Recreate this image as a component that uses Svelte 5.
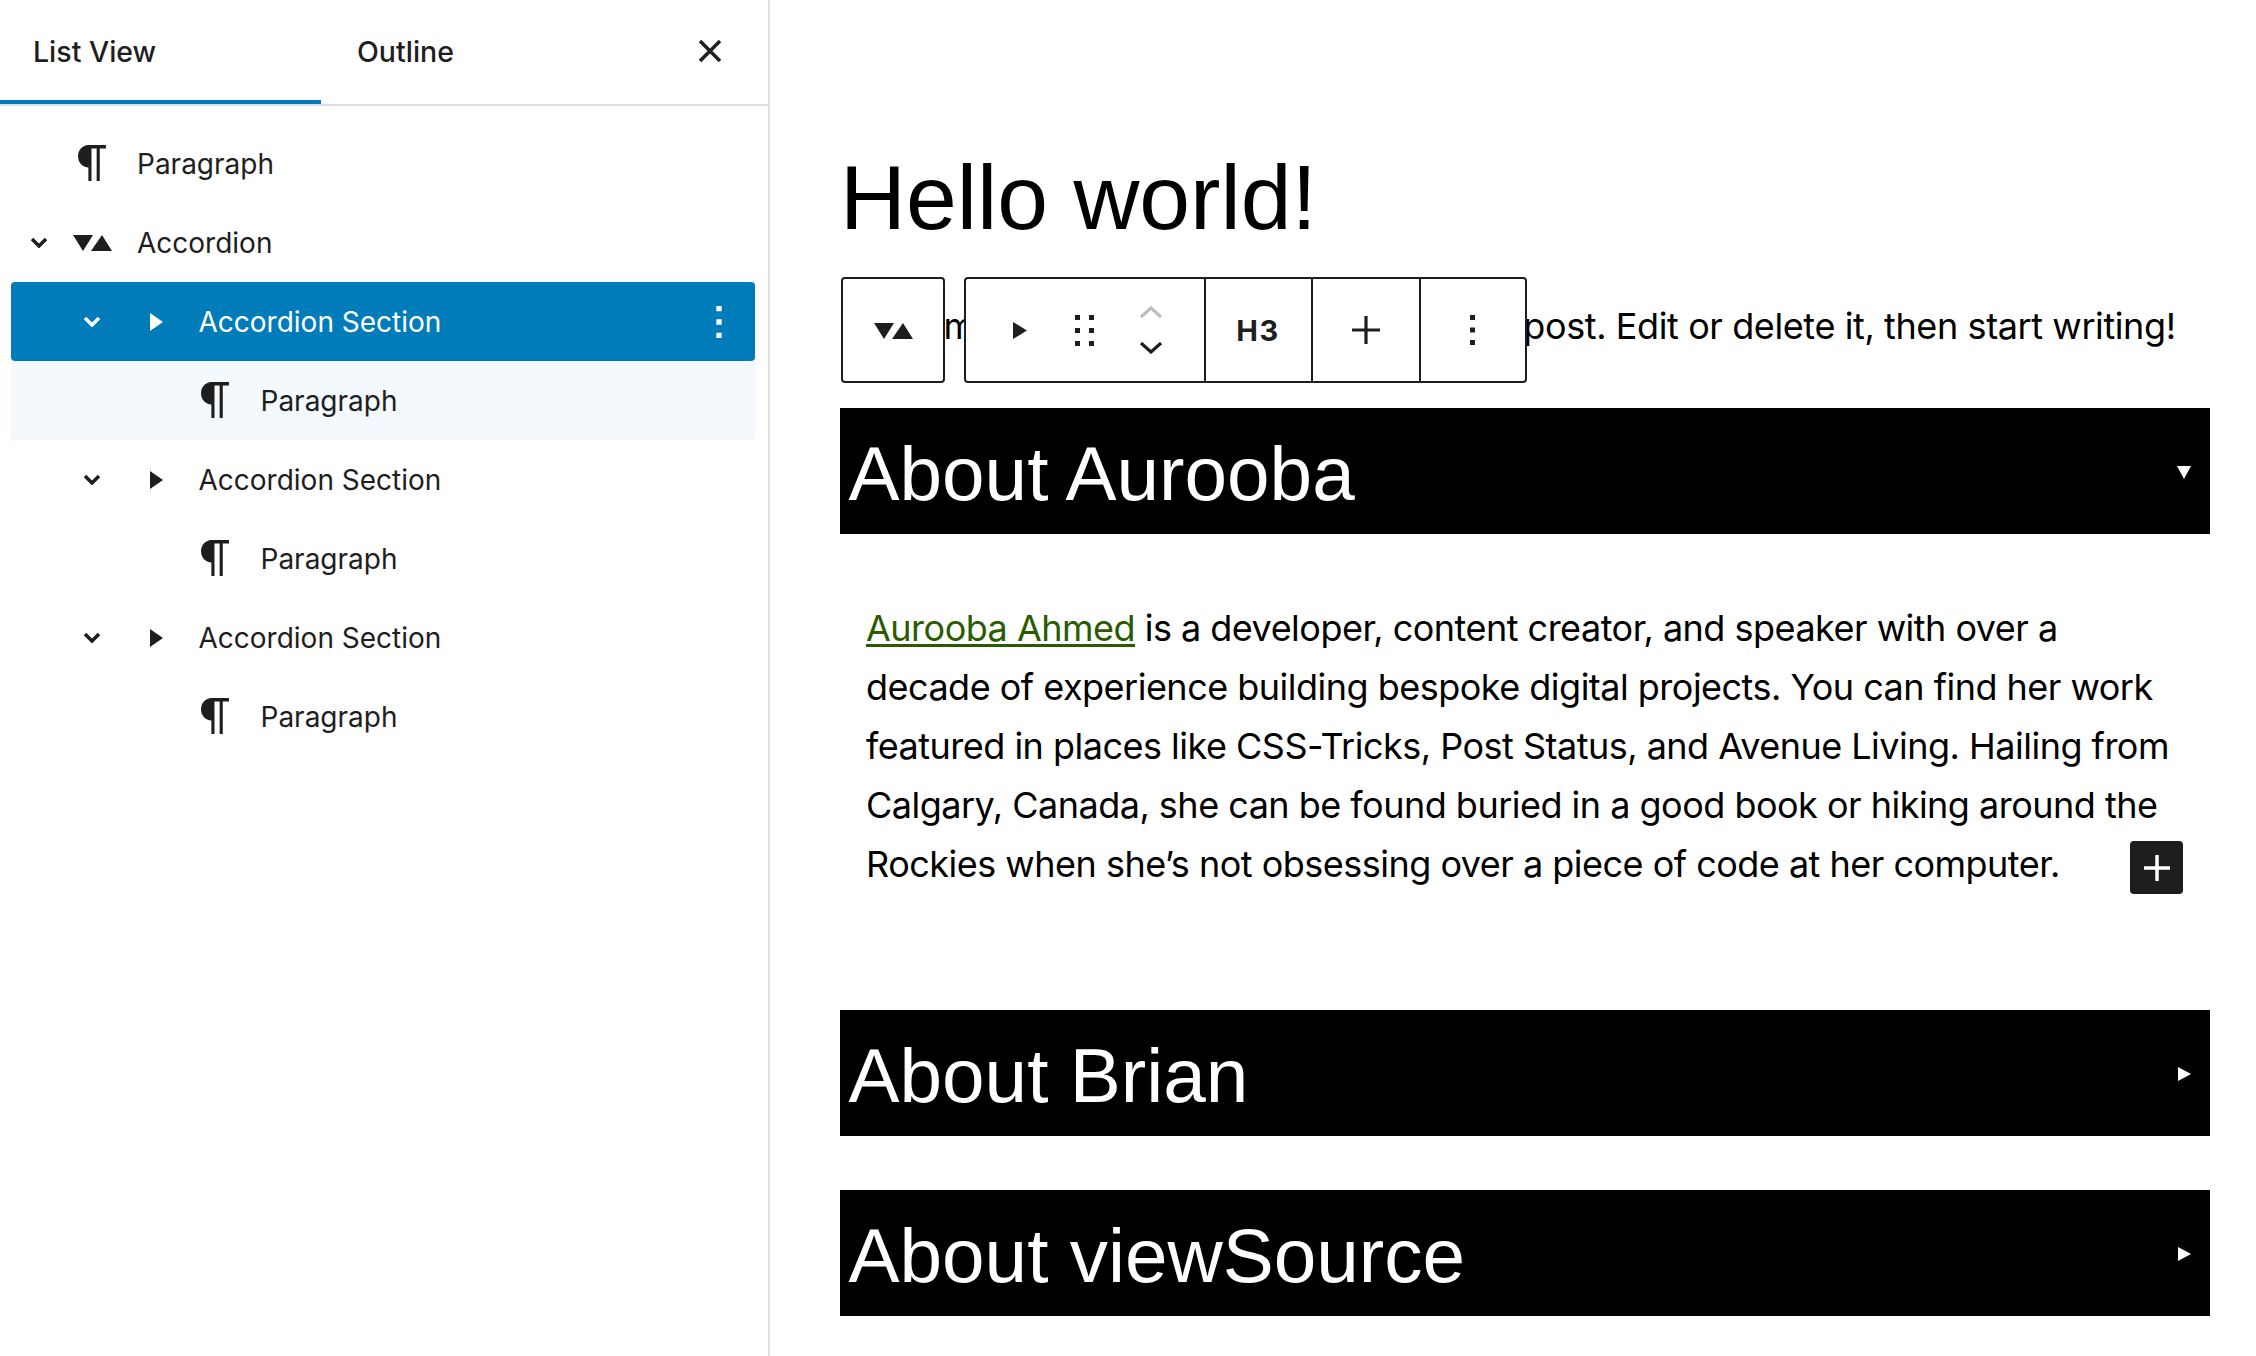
<script>
  const rows = [
    { kind: 'p', depth: 0, label: 'Paragraph' },
    { kind: 'a', depth: 0, label: 'Accordion', chev: true },
    { kind: 's', depth: 1, label: 'Accordion Section', chev: true, selected: true },
    { kind: 'p', depth: 2, label: 'Paragraph', tint: true },
    { kind: 's', depth: 1, label: 'Accordion Section', chev: true },
    { kind: 'p', depth: 2, label: 'Paragraph' },
    { kind: 's', depth: 1, label: 'Accordion Section', chev: true },
    { kind: 'p', depth: 2, label: 'Paragraph' }
  ];
  const para = 'm9.99609 14v-.2251l.00391.0001v6.225h1.5v-14.5h2.5v14.5h1.5v-14.5h3v-1.5h-8.50391c-2.76142 0-5 2.23858-5 5 0 2.7614 2.23858 5 5 5z';
</script>

{#snippet accIcon()}
  <svg class="acc" viewBox="0 0 39 16"><path d="M0 0h20l-10 16zM29 0l10 16h-21z" /></svg>
{/snippet}

{#snippet tri()}
  <svg class="tri" viewBox="0 0 13 18"><path d="M0 0l13 9-13 9z" /></svg>
{/snippet}

<div class="page">
  <aside class="side">
    <header class="tabs">
      <div class="tab active">List View</div>
      <div class="tab second">Outline</div>
      <svg class="close" viewBox="0 0 24 24"><path d="M2 2l20 20M22 2L2 22" /></svg>
    </header>
    <div class="list">
      {#each rows as r}
        <div class="row d{r.depth}" class:selected={r.selected} class:tint={r.tint}>
          {#if r.chev}
            <svg class="chev" viewBox="0 0 18 11"><path d="M2 2l7 7 7-7" /></svg>
          {/if}
          {#if r.kind === 'p'}
            <svg class="para" viewBox="4.500 4 14.500 16" preserveAspectRatio="none"><path d={para} /></svg>
          {:else if r.kind === 'a'}
            {@render accIcon()}
          {:else}
            {@render tri()}
          {/if}
          <span class="label">{r.label}</span>
          {#if r.selected}
            <svg class="kebab" viewBox="0 0 6 36"><path d="M0 0h6v6H0zM0 15h6v6H0zM0 30h6v6H0z" /></svg>
          {/if}
        </div>
      {/each}
    </div>
  </aside>

  <main class="content">
    <h1>Hello world!</h1>
    <p class="welcome">Welcome to WordPress. This is your first post. Edit or delete it, then start writing!</p>

    <section class="acc-item">
      <h3 class="bar">About Aurooba<svg class="marker" viewBox="0 0 14 14"><path d="M0 1h14l-7 13z" /></svg></h3>
      <p class="body"><a href="#top">Aurooba Ahmed</a> is a developer, content creator, and speaker with over a decade of experience building bespoke digital projects. You can find her work featured in places like CSS-Tricks, Post Status, and Avenue Living. Hailing from Calgary, Canada, she can be found buried in a good book or hiking around the Rockies when she’s not obsessing over a piece of code at her computer.</p>
      <div class="add"><svg viewBox="0 0 28 28"><path d="M14 1v26M1 14h26" /></svg></div>
    </section>

    <h3 class="bar brian">About Brian<svg class="marker" viewBox="0 0 14 14"><path d="M1 0l13 7-13 7z" /></svg></h3>
    <h3 class="bar vs">About viewSource<svg class="marker" viewBox="0 0 14 14"><path d="M1 0l13 7-13 7z" /></svg></h3>

    <div class="tb first">
      <svg class="small" viewBox="0 0 39 16"><path d="M0 0h20l-10 16zM29 0l10 16h-21z" /></svg>
    </div>
    <div class="tb second-tb">
      <div class="grp move">
        <svg class="t2" viewBox="0 0 14 17"><path d="M0 0l14 8.500-14 8.500z" /></svg>
        <svg class="drag" viewBox="0 0 19 31"><path d="M0 0h5v5H0zM14 0h5v5h-5zM0 13h5v5H0zM14 13h5v5h-5zM0 26h5v5H0zM14 26h5v5h-5z" /></svg>
        <div class="mover">
          <svg class="up" viewBox="0 0 24 12"><path d="M2 11L12 2l10 9" /></svg>
          <svg class="down" viewBox="0 0 24 12"><path d="M2 1l10 9 10-9" /></svg>
        </div>
      </div>
      <div class="grp h">H3</div>
      <div class="grp plus"><svg viewBox="0 0 28 28"><path d="M14 0v28M0 14h28" /></svg></div>
      <div class="grp more"><svg viewBox="0 0 6 36"><path d="M0 0h6v6H0zM0 15h6v6H0zM0 30h6v6H0z" /></svg></div>
    </div>
  </main>
</div>

<style>
  :global(body) { margin: 0; background: #fff; }
  .page { display: flex; width: 2256px; height: 1356px; overflow: hidden; font-family: Inter, "Liberation Sans", sans-serif; color: #1e1e1e; }
  .side { width: 768px; flex: none; border-right: 2px solid #e0e0e0; }
  .tabs { position: relative; display: flex; height: 104px; border-bottom: 2px solid #e0e0e0; }
  .tab { width: 321px; box-sizing: border-box; padding: 35px 0 0 33px; font-size: 28.500px; font-weight: 500; line-height: 34px; }
  .tab.active { border-bottom: 4px solid #007cba; }
  .tab.second { padding-left: 36px; }
  .close { position: absolute; left: 698px; top: 39px; width: 24px; height: 24px; fill: none; stroke: #1e1e1e; stroke-width: 3.500; }
  .list { padding: 18px 13px 0 11px; }
  .row { position: relative; display: flex; align-items: center; height: 79px; font-size: 28px; padding-left: 66px; }
  .row.d1 { padding-left: 139px; }
  .row.d2 { padding-left: 189px; }
  .row.selected { background: #007cba; color: #fff; border-radius: 4px; }
  .row.tint { background: #f3f9fd; }
  .row svg { fill: currentColor; flex: none; }
  .chev { position: absolute; left: 19px; top: 34px; width: 18px; height: 11px; fill: none !important; stroke: currentColor; stroke-width: 3.500; }
  .d1 .chev { left: 72px; }
  .para { width: 30px; height: 36px; margin-right: 30px; margin-top: -2px; }
  .d2 .para { margin-right: 30.500px; }
  .acc { width: 39px; height: 16px; margin-right: 25px; margin-left: -4px; }
  .tri { width: 13px; height: 18px; margin-right: 35.500px; }
  .kebab { position: absolute; right: 33px; top: 24px; width: 6px; height: 32px; }
  .label { position: relative; top: 0.500px; }

  .content { position: relative; flex: 1; padding: 0 46px 0 70px; min-width: 0; }
  h1 { margin: 0; padding-top: 136px; font: 400 91.300px/122px "Liberation Sans", sans-serif; color: #000; }
  .welcome { margin: 39px 0 0; font-size: 36px; letter-spacing: -0.400px; line-height: 59px; color: #000; white-space: nowrap; }
  .acc-item { position: relative; margin-top: 52px; }
  .bar { position: relative; display: flex; align-items: center; box-sizing: border-box; margin: 0; height: 126px; padding: 5px 0 0 8.500px; background: #000; color: #fff; font: 400 76.500px/121px "Liberation Sans", sans-serif; }
  .marker { position: absolute; left: 1337px; top: 57px; width: 14px; height: 14px; fill: #fff; }
  .body { margin: 64.500px 0 0; padding: 0 26px; font-size: 36px; letter-spacing: -0.510px; line-height: 59.200px; color: #000; }
  .body a { color: #2b5b00; text-decoration: underline; text-underline-offset: 3px; }
  .add { position: absolute; left: 1290px; top: 433px; width: 53px; height: 53px; display: flex; align-items: center; justify-content: center; background: #1e1e1e; border-radius: 4px; }
  .add svg { width: 28px; height: 28px; fill: none; stroke: #fff; stroke-width: 3.500; }
  .brian { margin-top: 115.500px; }
  .vs { margin-top: 54px; }

  .tb { position: absolute; top: 277px; height: 106px; box-sizing: border-box; background: #fff; border: 2.500px solid #1e1e1e; border-radius: 4px; display: flex; }
  .first { left: 71px; width: 104px; align-items: center; justify-content: center; }
  .small { display: block; width: 39px; height: 16px; margin-top: 2px; fill: #1e1e1e; }
  .second-tb { left: 193.500px; width: 563.500px; }
  .grp { display: flex; align-items: center; justify-content: center; box-sizing: border-box; border-right: 2.500px solid #1e1e1e; }
  .grp:last-child { border-right: 0; }
  .move { width: 240px; position: relative; }
  .move svg { position: absolute; }
  .t2 { left: 47px; top: 42.500px; width: 14px; height: 17px; fill: #1e1e1e; }
  .drag { left: 109px; top: 35.500px; width: 19px; height: 31px; fill: #1e1e1e; }
  .mover { position: absolute; inset: 0; }
  .up, .down { left: 173px; width: 24px; height: 12px; fill: none; stroke-width: 3.200; }
  .up { top: 26.500px; stroke: #bdbdbd; }
  .down { top: 62.500px; stroke: #1e1e1e; }
  .h { width: 107px; font-size: 29px; font-weight: 700; letter-spacing: 1.500px; }
  .plus { width: 108px; }
  .plus svg { width: 28px; height: 28px; fill: none; stroke: #1e1e1e; stroke-width: 3.200; }
  .more { flex: 1; }
  .more svg { width: 5px; height: 32px; fill: #1e1e1e; }
</style>
